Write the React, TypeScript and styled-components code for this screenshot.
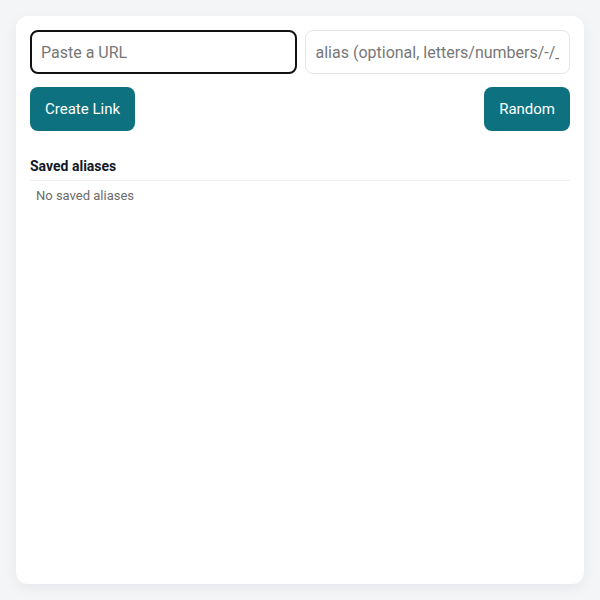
import { createGlobalStyle, styled } from 'styled-components'

const GlobalStyle = createGlobalStyle`
  * { box-sizing: border-box; }
  html, body {
    margin: 0;
    background: #f4f5f7;
    font-family: Roboto, "Liberation Sans", sans-serif;
  }
`

export default function App() {
  return (
    <>
      <GlobalStyle />
      <StyledPage>
        <StyledCard>
          <StyledInputRow>
            <StyledInput placeholder="Paste a URL" $focused />
            <StyledInput placeholder="alias (optional, letters/numbers/-/_)" />
          </StyledInputRow>
          <StyledButtonRow>
            <StyledButton>Create Link</StyledButton>
            <StyledButton>Random</StyledButton>
          </StyledButtonRow>
          <StyledSection>
            <StyledSectionTitle>Saved aliases</StyledSectionTitle>
            <StyledEmpty>No saved aliases</StyledEmpty>
          </StyledSection>
        </StyledCard>
      </StyledPage>
    </>
  )
}

const StyledPage = styled.div`
  height: 600px;
  padding: 16px;
`

const StyledCard = styled.div`
  height: 568px;
  background: #ffffff;
  border-radius: 12px;
  box-shadow: 0 4px 14px rgba(15, 23, 42, 0.06);
  padding: 14px;
`

const StyledInputRow = styled.div`
  display: flex;
  gap: 8px;
`

const StyledInput = styled.input<{ $focused?: boolean }>`
  flex: 1;
  min-width: 0;
  height: 44px;
  font-family: Roboto, "Liberation Sans", sans-serif;
  font-size: 16px;
  color: #111;
  background: #fff;
  border-radius: 8px;
  border: ${({ $focused }) => ($focused ? '2px solid #111' : '1px solid #e5e7eb')};
  padding: 0 10px 0 ${({ $focused }) => ($focused ? '9px' : '10px')};
  outline: none;

  &::placeholder {
    color: #777;
  }
`

const StyledButtonRow = styled.div`
  display: flex;
  justify-content: space-between;
  margin-top: 13px;
`

const StyledButton = styled.button`
  height: 44px;
  padding: 0 15px;
  border: none;
  border-radius: 8px;
  background: #0d717f;
  color: #fff;
  font-family: Roboto, "Liberation Sans", sans-serif;
  font-size: 15px;
  cursor: pointer;
`

const StyledSection = styled.div`
  margin-top: 26px;
`

const StyledSectionTitle = styled.div`
  font-size: 14px;
  font-weight: 700;
  color: #111827;
  padding: 1px 0 6px;
  border-bottom: 1px solid #eef0f2;
`

const StyledEmpty = styled.div`
  font-size: 13px;
  color: #6b6b6b;
  padding: 7px 6px;
`
